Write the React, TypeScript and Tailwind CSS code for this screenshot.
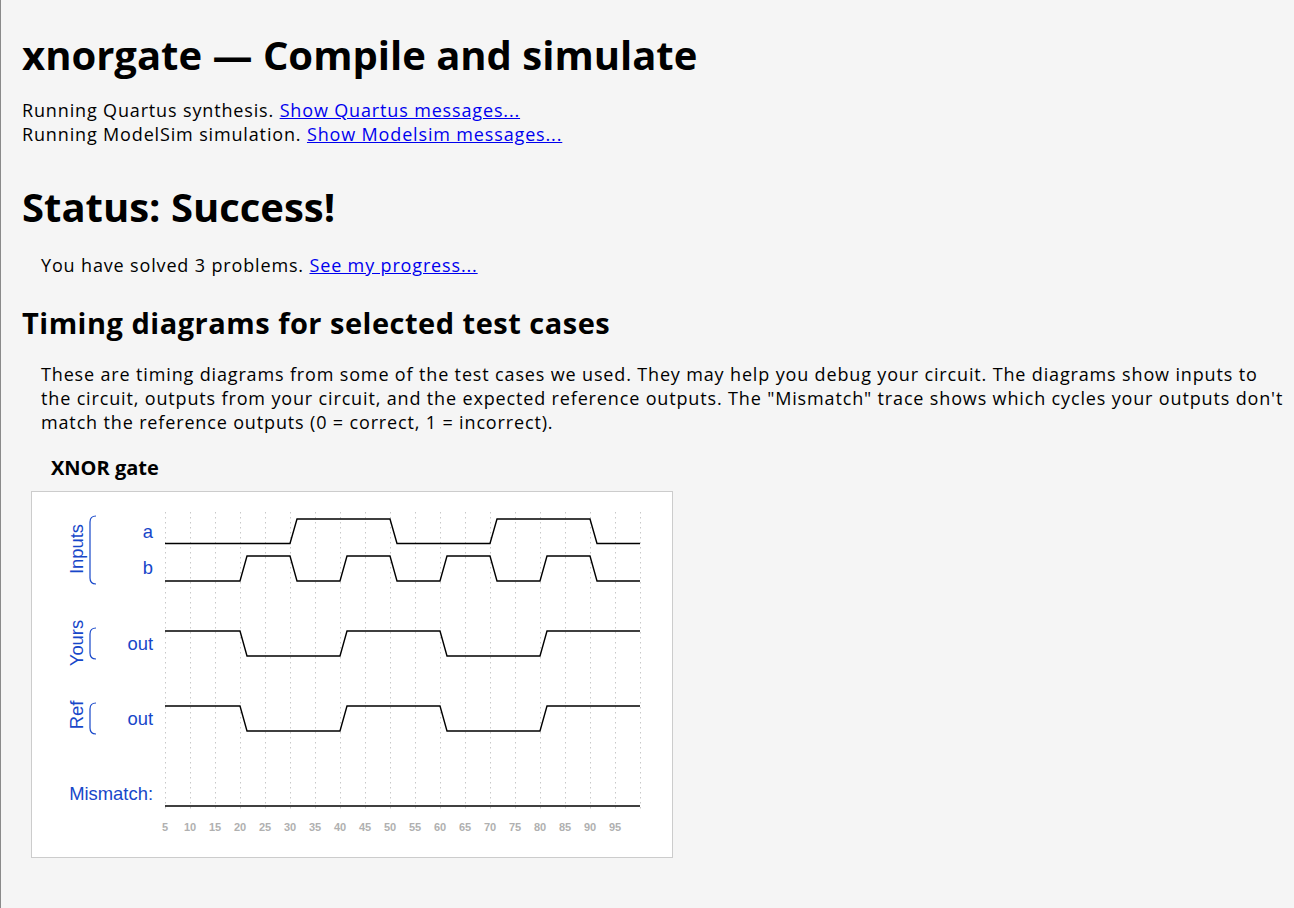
import React from "react";

const X0 = 133; // svg x of t=5
const px = (t: number) => X0 + (t - 5) * 5;
const TR = 7;

function wave(bits: [number, number][], hi: number, lo: number) {
  const pts: string[] = [];
  let prev = bits[0][1];
  pts.push(`${px(5)},${prev ? hi : lo}`);
  for (let i = 1; i < bits.length; i++) {
    const [t, v] = bits[i];
    if (v === prev) continue;
    pts.push(`${px(t)},${prev ? hi : lo}`);
    pts.push(`${px(t) + TR},${v ? hi : lo}`);
    prev = v;
  }
  pts.push(`${px(100)},${prev ? hi : lo}`);
  return pts.join(" ");
}

const aBits: [number, number][] = [
  [5, 0],
  [30, 1],
  [50, 0],
  [70, 1],
  [90, 0],
];
const bBits: [number, number][] = [
  [5, 0],
  [20, 1],
  [30, 0],
  [40, 1],
  [50, 0],
  [60, 1],
  [70, 0],
  [80, 1],
  [90, 0],
];
const outBits: [number, number][] = [
  [5, 1],
  [20, 0],
  [40, 1],
  [60, 0],
  [80, 1],
];

const BLUE = "#1747c9";

function Bracket({ y1, y2 }: { y1: number; y2: number }) {
  return (
    <path
      d={`M64 ${y1} Q58 ${y1} 58 ${y1 + 6} L58 ${y2 - 6} Q58 ${y2} 64 ${y2}`}
      fill="none"
      stroke={BLUE}
      strokeWidth={1.2}
    />
  );
}

function Diagram() {
  const ticks: number[] = [];
  for (let t = 5; t <= 100; t += 5) ticks.push(t);
  return (
    <svg width={640} height={365} className="block">
      {ticks.map((t) => (
        <line
          key={t}
          x1={px(t) + 0.5}
          x2={px(t) + 0.5}
          y1={20}
          y2={317}
          stroke="#c8c8c8"
          strokeWidth={1}
          strokeDasharray="1.5 3.5"
        />
      ))}
      <g fontFamily="'Liberation Sans', Arial, sans-serif" fontSize={18.4} fill={BLUE}>
        <text x={51} y={57} transform="rotate(-90 51 57)" textAnchor="middle">
          Inputs
        </text>
        <text x={51} y={151} transform="rotate(-90 51 151)" textAnchor="middle">
          Yours
        </text>
        <text x={51} y={223} transform="rotate(-90 51 223)" textAnchor="middle">
          Ref
        </text>
        <text x={121} y={46} textAnchor="end">a</text>
        <text x={121} y={82} textAnchor="end">b</text>
        <text x={121} y={158} textAnchor="end">out</text>
        <text x={121} y={233} textAnchor="end">out</text>
        <text x={121} y={308} textAnchor="end">Mismatch:</text>
      </g>
      <Bracket y1={24} y2={92} />
      <Bracket y1={136} y2={167} />
      <Bracket y1={211} y2={242} />
      <g fill="none" stroke="#000" strokeWidth={1.4}>
        <polyline points={wave(aBits, 27, 51.5)} />
        <polyline points={wave(bBits, 64, 89)} />
        <polyline points={wave(outBits, 139, 164)} />
        <polyline points={wave(outBits, 214, 239)} />
        <polyline points={`${px(5)},314 ${px(100)},314`} />
      </g>
      <g
        fontFamily="'Liberation Sans', Arial, sans-serif"
        fontSize={11}
        fontWeight="bold"
        fill="#b0b0b0"
        textAnchor="middle"
      >
        {ticks
          .filter((t) => t < 100)
          .map((t) => (
            <text key={t} x={px(t)} y={339}>
              {t}
            </text>
          ))}
      </g>
    </svg>
  );
}

export default function App() {
  const sans = "font-['Open_Sans','Noto_Sans',sans-serif]";
  const head = `${sans} font-bold text-black`;
  const bodyText = `${sans} text-[18px] leading-[24px] tracking-[0.85px]`;
  return (
    <div className="min-h-[908px] w-[1294px] bg-[#f5f5f5] border-l border-[#8a8a8a] text-black">
      <div className="pl-[21px] pt-[33px] pb-[50px]">
        <h1 className={`${head} text-[40px] leading-[44px]`}>xnorgate — Compile and simulate</h1>
        <div className={`mt-[21px] ${bodyText}`}>
          <div>
            Running Quartus synthesis.{" "}
            <a href="#" className="text-[#0000ee] underline">Show Quartus messages...</a>
          </div>
          <div>
            Running ModelSim simulation.{" "}
            <a href="#" className="text-[#0000ee] underline">Show Modelsim messages...</a>
          </div>
        </div>
        <h2 className={`${head} mt-[37px] text-[40px] leading-[48px]`}>Status: Success!</h2>
        <p className={`mt-[22px] pl-[19px] ${bodyText}`}>
          You have solved 3 problems.{" "}
          <a href="#" className="text-[#0000ee] underline">See my progress...</a>
        </p>
        <h3 className={`${head} mt-[29px] text-[29px] leading-[34px] tracking-[0.5px]`}>
          Timing diagrams for selected test cases
        </h3>
        <p className={`mt-[22px] pl-[19px] whitespace-nowrap ${bodyText}`}>
          <span className="block">
            These are timing diagrams from some of the test cases we used. They may help you debug your circuit. The
            diagrams show inputs to
          </span>
          <span className="block">
            the circuit, outputs from your circuit, and the expected reference outputs. The "Mismatch" trace shows which
            cycles your outputs don't
          </span>
          <span className="block">match the reference outputs (0 = correct, 1 = incorrect).</span>
        </p>
        <div className={`${head} mt-[22px] pl-[29px] text-[20px] leading-[24px]`}>XNOR gate</div>
        <div className="mt-[11px] ml-[9px] w-[642px] border border-[#cccccc] bg-white">
          <Diagram />
        </div>
      </div>
    </div>
  );
}
